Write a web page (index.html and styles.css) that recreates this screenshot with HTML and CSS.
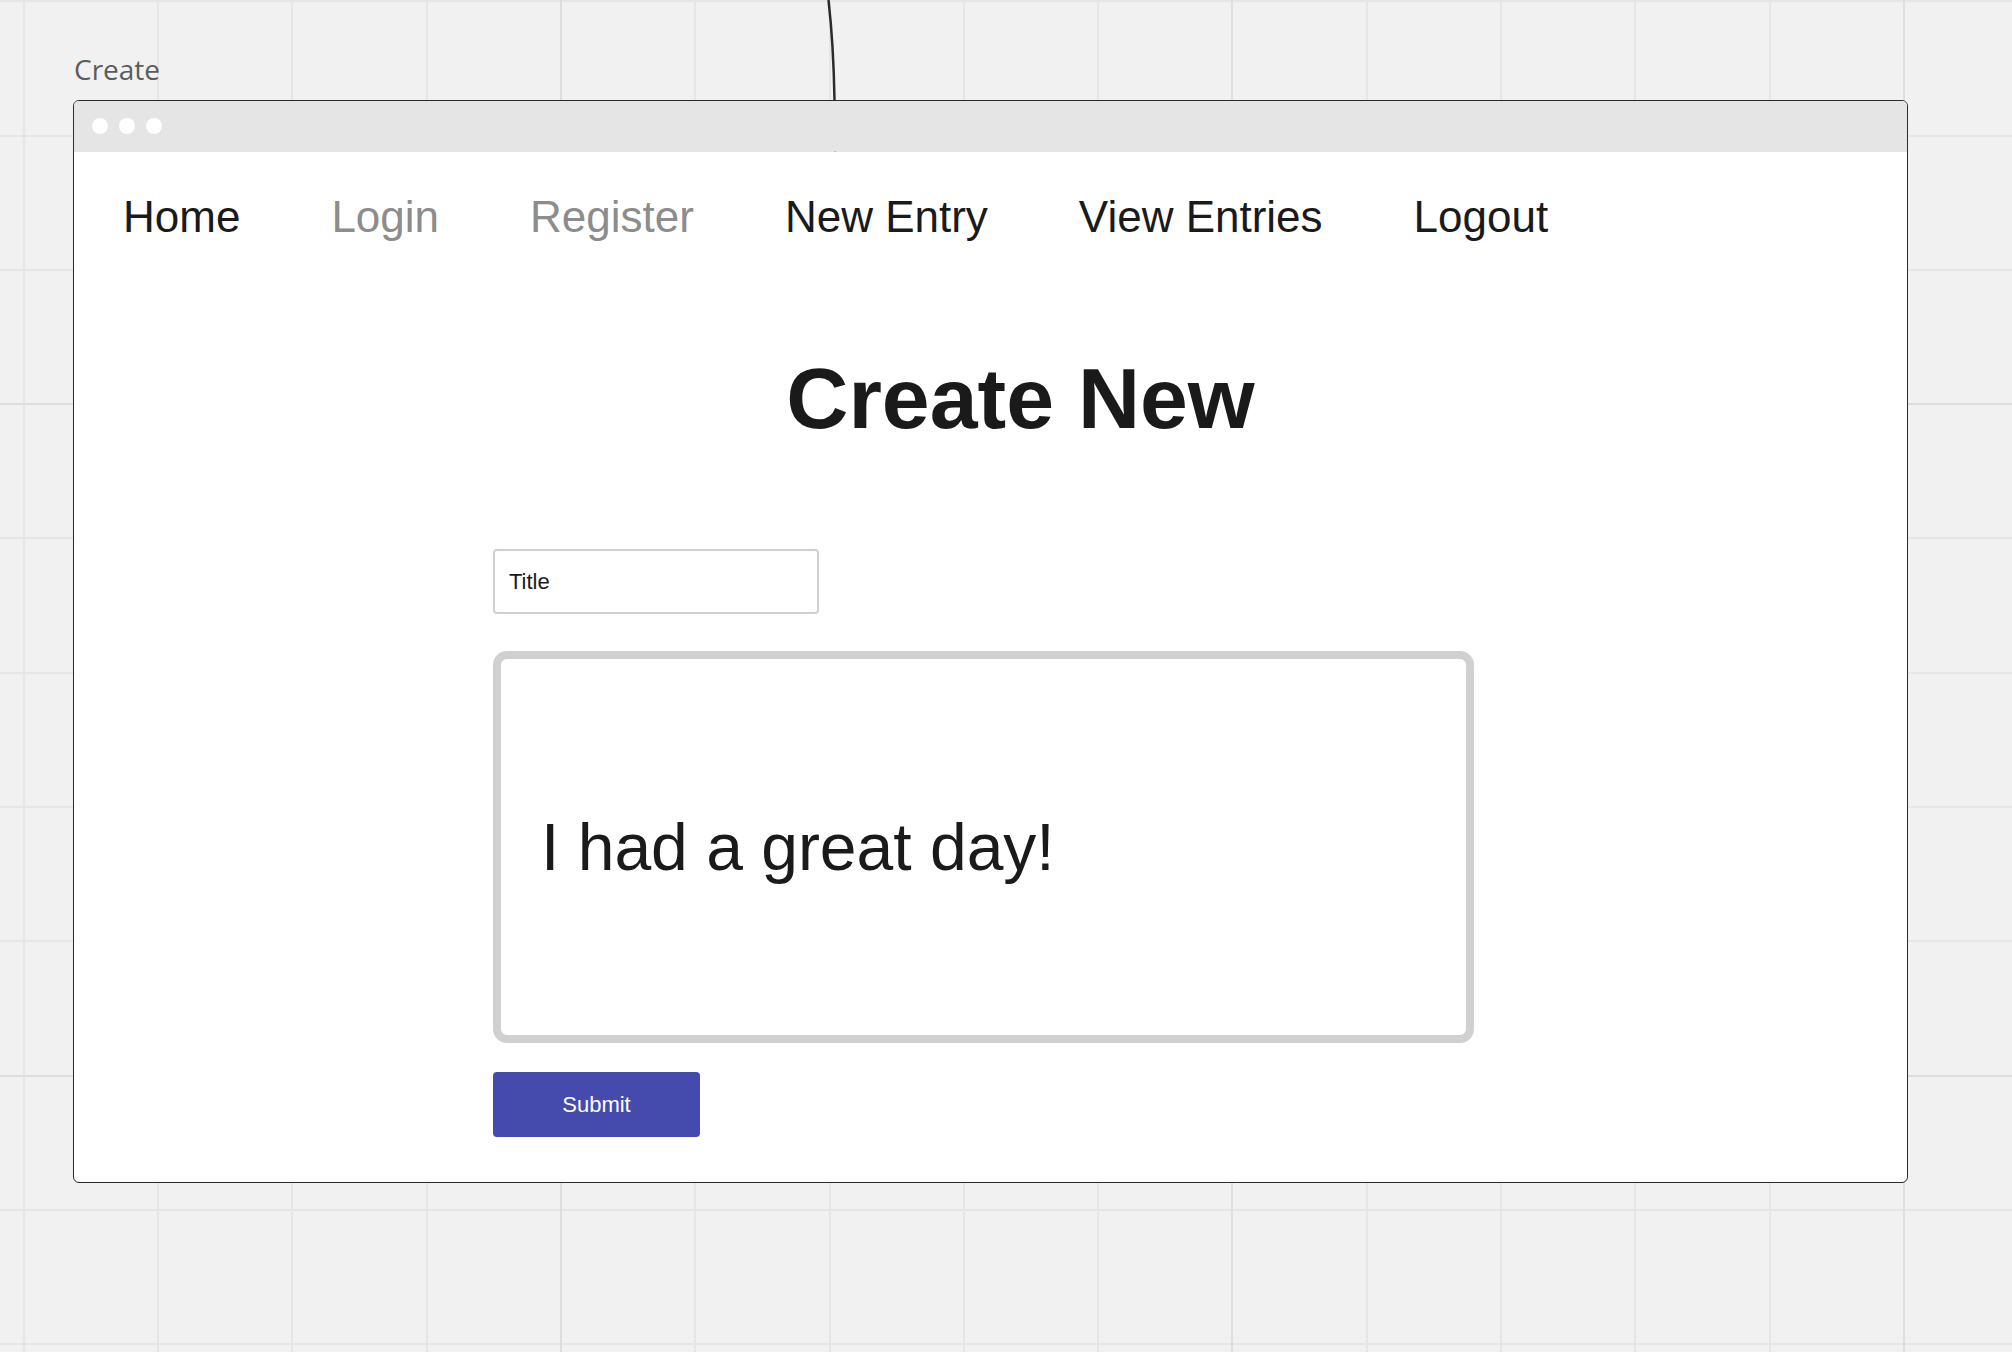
FILE: index.html
```html
<!DOCTYPE html>
<html lang="en">
<head>
<meta charset="utf-8">
<meta name="viewport" content="width=device-width, initial-scale=1">
<title>Create</title>
<link rel="stylesheet" href="styles.css">
</head>
<body class="board">
<svg class="grid" width="100%" height="100%" aria-hidden="true">
  <defs>
    <pattern id="cells" width="1343" height="1343" patternUnits="userSpaceOnUse">
      <path class="minor" d="M24 0V1343M158 0V1343M292 0V1343M427 0V1343M695 0V1343M830 0V1343M964 0V1343M1098 0V1343M0 1H1343M0 136H1343M0 270H1343M0 538H1343M0 673H1343M0 807H1343M0 941H1343M0 1210H1343"/>
      <path class="major" d="M561 0V1343M1232 0V1343M0 404H1343M0 1076H1343"/>
    </pattern>
  </defs>
  <rect width="100%" height="100%" fill="url(#cells)"/>
</svg>
<div class="frame">
  <div class="frame-label">Create</div>
  <div class="window">
    <div class="titlebar"><span class="dot"></span><span class="dot"></span><span class="dot"></span></div>
    <nav class="nav">
      <a href="#">Home</a>
      <a href="#" class="muted">Login</a>
      <a href="#" class="muted">Register</a>
      <a href="#">New Entry</a>
      <a href="#">View Entries</a>
      <a href="#">Logout</a>
    </nav>
    <main class="main">
      <form class="form">
        <h1 class="heading">Create New</h1>
        <input class="title-input" type="text" value="Title" aria-label="Title">
        <textarea class="entry" aria-label="Entry">I had a great day!</textarea>
        <button class="submit" type="button">Submit</button>
      </form>
    </main>
  </div>
</div>
<svg class="connector" width="12" height="152" viewBox="0 0 12 152" aria-hidden="true">
  <path d="M2.500 0Q7.500 44 8.500 100" fill="none" stroke="#2b2b2b" stroke-width="2.500"/>
  <path d="M8 151h2v1h-2z" fill="#bdbdbd"/>
</svg>
</body>
</html>
```
FILE: styles.css
```css
* {
  box-sizing: border-box;
}

.board {
  position: relative;
  margin: 0;
  min-height: 100vh;
  background: #f1f1f1;
  color: #1a1a1a;
  font-family: "Liberation Sans", Arial, sans-serif;
}

.grid {
  position: absolute;
  inset: 0;
}

.grid path {
  fill: none;
  stroke-width: 2;
}

.minor {
  stroke: #e6e6e6;
}

.major {
  stroke: #dedede;
}

.connector {
  position: absolute;
  top: 0;
  left: 826px;
}

.frame {
  position: relative;
  padding: 51px 104px 51px 73px;
}

.frame-label {
  margin-bottom: 13px;
  padding-left: 1px;
  color: #5c5c5c;
  font: 28px/36px "Open Sans", sans-serif;
}

.window {
  overflow: hidden;
  border: 1px solid #2b2b2b;
  border-radius: 6px;
  background: #fff;
}

.titlebar {
  display: flex;
  align-items: center;
  gap: 11px;
  height: 51px;
  padding: 0 18px 2px;
  background: #e5e5e5;
}

.dot {
  width: 16px;
  height: 16px;
  border-radius: 50%;
  background: #fff;
}

.nav {
  display: flex;
  flex-wrap: wrap;
  gap: 0 91px;
  padding: 39px 49px 0;
  font-size: 44px;
  line-height: 52px;
}

.nav a {
  color: inherit;
  text-decoration: none;
}

.nav .muted {
  color: #8c8c8c;
}

.main {
  padding: 107px 14px 45px 0;
}

.form {
  display: flex;
  flex-direction: column;
  align-items: flex-start;
  max-width: 981px;
  margin: 0 auto;
}

.heading {
  align-self: center;
  margin: 0 0 103px;
  padding-left: 74px;
  font-size: 86px;
  line-height: 96px;
}

.title-input {
  width: 326px;
  height: 65px;
  margin-bottom: 37px;
  padding: 0 14px;
  border: 2px solid #d0d0d0;
  border-radius: 4px;
  background: #fff;
  color: inherit;
  font: inherit;
  font-size: 22px;
}

.entry {
  width: 100%;
  height: 392px;
  margin-bottom: 29px;
  padding: 150px 40px 0;
  border: 8px solid #d0d0d0;
  border-radius: 14px;
  background: #fff;
  color: inherit;
  font: inherit;
  font-size: 66px;
  line-height: 76px;
  resize: none;
  overflow: hidden;
}

.submit {
  width: 207px;
  height: 65px;
  padding: 0;
  border: 0;
  border-radius: 4px;
  background: #444bac;
  color: #fff;
  font: inherit;
  font-size: 22px;
}
```
